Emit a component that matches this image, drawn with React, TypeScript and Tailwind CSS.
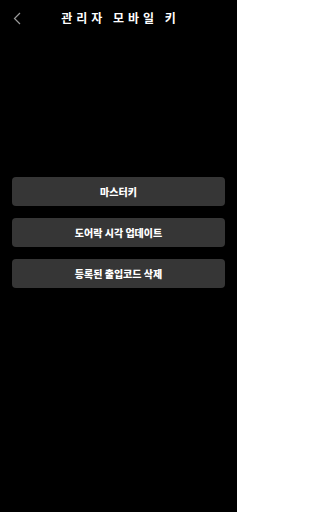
import React from 'react';

const actions = ['마스터키', '도어락 시각 업데이트', '등록된 출입코드 삭제'];

const App = () => {
  return (
    <div
      className="w-[237px] h-[512px] bg-black text-white flex flex-col"
      style={{ fontFamily: '"Noto Sans CJK KR", "Noto Sans", sans-serif' }}
    >
      {/* header */}
      <div className="relative h-[36px] flex items-center justify-center">
        <button className="absolute left-[12px] top-[11px] w-[10px] h-[14px] flex items-center justify-center">
          <svg width="8" height="13" viewBox="0 0 8 13" fill="none">
            <path d="M7 1L1.5 6.5L7 12" stroke="#9a9a9a" strokeWidth="1.2" />
          </svg>
        </button>
        <h1 className="text-[12px] font-bold tracking-[4px] pl-[4px] leading-none">관리자 모바일 키</h1>
      </div>

      {/* actions */}
      <div className="mt-[141px] px-[12px] flex flex-col gap-[12px]">
        {actions.map((label, i) => (
          <button
            key={i}
            className="h-[29px] w-full rounded-[4px] bg-[#363636] text-[10px] font-black text-white flex items-center justify-center"
          >
            {label}
          </button>
        ))}
      </div>
    </div>
  );
};

export default App;
